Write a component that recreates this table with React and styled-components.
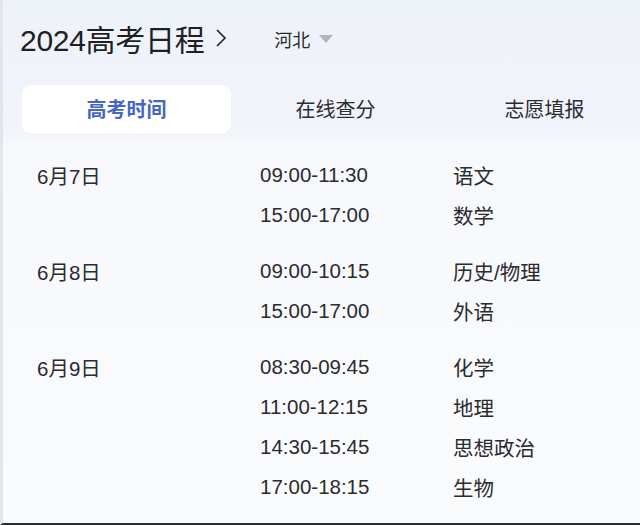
import React from "react";
import styled, { createGlobalStyle } from "styled-components";

const Global = createGlobalStyle`
  html, body { margin: 0; padding: 0; background: #ffffff; }
  * { box-sizing: border-box; }
`;

const FONT = `"Liberation Sans", "Noto Sans CJK SC", Arial, sans-serif`;

const Page = styled.div`
  width: 640px;
  height: 525px;
  overflow: hidden;
  display: flex;
  flex-direction: column;
  font-family: ${FONT};
  background: linear-gradient(180deg, #eef2f9 0%, #f1f4fa 132px, #f7f8fb 142px, #fafbfd 100%);
  border-left: 3px solid #e3e5ea;
  border-bottom: 2px solid #2e2f33;
`;

const Header = styled.div`
  height: 85px;
  display: flex;
  align-items: center;
  padding-left: 17px;
  padding-bottom: 10px;
`;

const Title = styled.div`
  font-size: 30px;
  color: #1f1f24;
  letter-spacing: -0.3px;
  display: flex;
  align-items: center;
`;

const Chevron = styled.svg`
  width: 14px;
  height: 22px;
  margin-left: 10px;
`;

const Region = styled.div`
  margin-left: 46px;
  display: flex;
  align-items: center;
  font-size: 18px;
  color: #2a2a2e;
  padding-top: 2px;
`;

const Caret = styled.span`
  width: 0;
  height: 0;
  margin-left: 9px;
  border-left: 7px solid transparent;
  border-right: 7px solid transparent;
  border-top: 8px solid #b3b5ba;
`;

const Tabs = styled.div`
  margin-left: 19px;
  height: 48px;
  display: grid;
  grid-template-columns: repeat(3, 209px);
`;

const Tab = styled.div`
  display: flex;
  align-items: center;
  justify-content: center;
  font-size: 20px;
  padding-bottom: 2px;
  border-radius: 9px;
  color: ${(p) => (p.$active ? "#4565c8" : "#2c2c30")};
  font-weight: ${(p) => (p.$active ? 700 : 400)};
  background: ${(p) => (p.$active ? "#ffffff" : "transparent")};
`;

const List = styled.div`
  display: flex;
  flex-direction: column;
  gap: 16px;
  padding-top: 22px;
  padding-left: 34px;
`;

const Group = styled.div`
  display: grid;
  grid-template-columns: 223px 193px 1fr;
  grid-auto-rows: 40px;
`;

const Cell = styled.div`
  display: flex;
  align-items: center;
  font-size: 20.5px;
  color: #2b2b2f;
`;

const DateCell = styled(Cell)`
  grid-column: 1;
  grid-row: 1;
`;

const data = [
  { date: "6月7日", items: [["09:00-11:30", "语文"], ["15:00-17:00", "数学"]] },
  { date: "6月8日", items: [["09:00-10:15", "历史/物理"], ["15:00-17:00", "外语"]] },
  {
    date: "6月9日",
    items: [
      ["08:30-09:45", "化学"],
      ["11:00-12:15", "地理"],
      ["14:30-15:45", "思想政治"],
      ["17:00-18:15", "生物"],
    ],
  },
];

export default function App() {
  return (
    <>
      <Global />
      <Page>
        <Header>
          <Title>
            2024高考日程
            <Chevron viewBox="0 0 14 22">
              <path d="M3 3 L11 11 L3 19" fill="none" stroke="#1f1f24" strokeWidth="1.6" />
            </Chevron>
          </Title>
          <Region>
            河北
            <Caret />
          </Region>
        </Header>
        <Tabs>
          <Tab $active>高考时间</Tab>
          <Tab>在线查分</Tab>
          <Tab>志愿填报</Tab>
        </Tabs>
        <List>
          {data.map((g) => (
            <Group key={g.date}>
              <DateCell>{g.date}</DateCell>
              {g.items.map(([t, s], i) => (
                <React.Fragment key={t + s}>
                  <Cell style={{ gridColumn: 2, gridRow: i + 1 }}>{t}</Cell>
                  <Cell style={{ gridColumn: 3, gridRow: i + 1 }}>{s}</Cell>
                </React.Fragment>
              ))}
            </Group>
          ))}
        </List>
      </Page>
    </>
  );
}
